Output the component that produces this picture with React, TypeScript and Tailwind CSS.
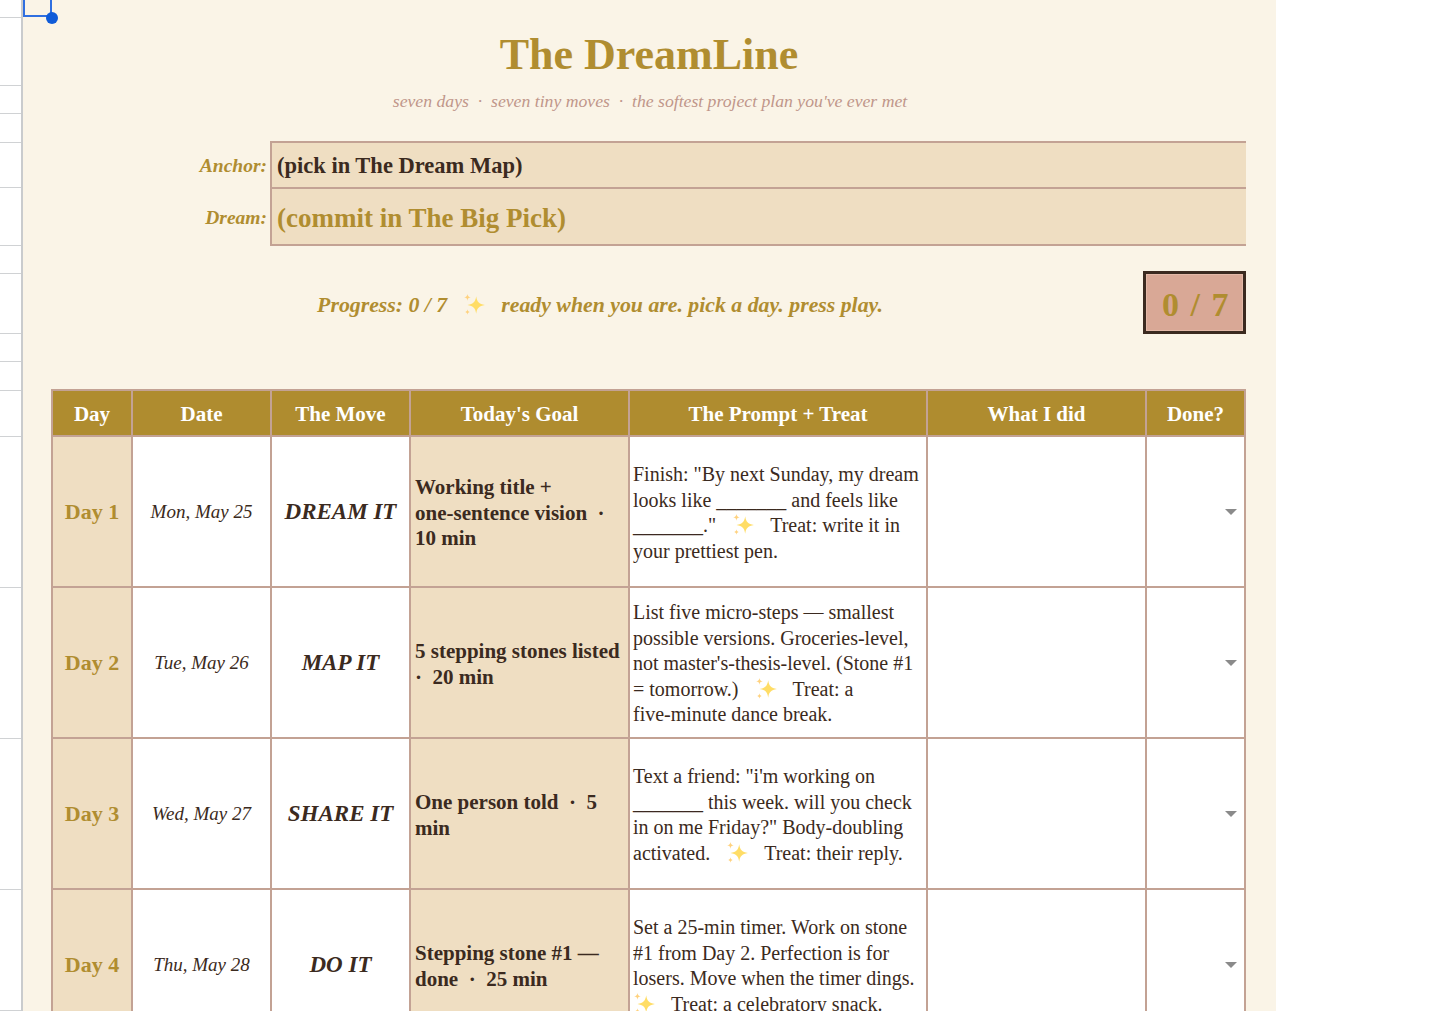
import React from "react";

const Sparkle = () => (
  <svg viewBox="0 0 22 22" className="inline-block w-[24px] h-[24px] align-[-5px] mx-[15px]">
    <path d="M13 3 C13.8 8.2 15.4 10 21 11 C15.4 12 13.8 13.8 13 19 C12.2 13.8 10.6 12 5 11 C10.6 10 12.2 8.2 13 3Z" fill="#FFDD66" />
    <path d="M5 1 C5.3 3 5.9 3.6 8 4 C5.9 4.4 5.3 5 5 7 C4.7 5 4.1 4.4 2 4 C4.1 3.6 4.7 3 5 1Z" fill="#FFD27F" />
    <path d="M5 15 C5.2 16.6 5.7 17 7 17.5 C5.7 18 5.2 18.4 5 20 C4.8 18.4 4.3 18 3 17.5 C4.3 17 4.8 16.6 5 15Z" fill="#FFD27F" />
  </svg>
);

const railRows = [18, 68, 28, 29, 45, 58, 28, 60, 28, 29, 46, 151, 151, 151, 121];

const rows = [
  {
    day: "Day 1",
    date: "Mon, May 25",
    move: "DREAM IT",
    goal: <>Working title +<br />one-sentence vision &nbsp;·&nbsp;<br />10 min</>,
    prompt: <>Finish: "By next Sunday, my dream<br />looks like _______ and feels like<br />_______."<Sparkle />Treat: write it in<br />your prettiest pen.</>,
  },
  {
    day: "Day 2",
    date: "Tue, May 26",
    move: "MAP IT",
    goal: <>5 stepping stones listed<br />·&nbsp; 20 min</>,
    prompt: <>List five micro-steps — smallest<br />possible versions. Groceries-level,<br />not master's-thesis-level. (Stone #1<br />= tomorrow.)<Sparkle />Treat: a<br />five-minute dance break.</>,
  },
  {
    day: "Day 3",
    date: "Wed, May 27",
    move: "SHARE IT",
    goal: <>One person told &nbsp;·&nbsp; 5<br />min</>,
    prompt: <>Text a friend: "i'm working on<br />_______ this week. will you check<br />in on me Friday?" Body-doubling<br />activated.<Sparkle />Treat: their reply.</>,
  },
  {
    day: "Day 4",
    date: "Thu, May 28",
    move: "DO IT",
    goal: <>Stepping stone #1 —<br />done &nbsp;·&nbsp; 25 min</>,
    prompt: <>Set a 25-min timer. Work on stone<br />#1 from Day 2. Perfection is for<br />losers. Move when the timer dings.<br /><span className="-ml-[16px]"><Sparkle /></span>Treat: a celebratory snack.</>,
  },
];

const heads = ["Day", "Date", "The Move", "Today's Goal", "The Prompt + Treat", "What I did", "Done?"];
const widths = ["w-[80px]", "w-[139px]", "w-[139px]", "w-[219px]", "w-[298px]", "w-[219px]", "w-[99px]"];

export default function App() {
  return (
    <div className="relative flex w-[1445px] h-[1011px] overflow-hidden bg-white text-[#3b2a20] font-['Liberation_Serif',serif]">
      <div className="w-[23px] shrink-0 border-r-2 border-[#c9cbcd]">
        {railRows.map((h, i) => (
          <div key={i} style={{ height: h }} className="border-b border-[#d0d2d4]" />
        ))}
      </div>

      <div className="w-[1253px] shrink-0 bg-[#faf4e7] pl-[29px] pr-[30px]">
        <h1 className="h-[84px] pt-[28px] text-center text-[44px] leading-[54px] font-bold text-[#b08d30]">The DreamLine</h1>
        <p className="h-[57px] pt-[2px] pl-[2px] text-center text-[17.7px] leading-[30px] italic text-[#c0968a]">
          seven days &nbsp;·&nbsp; seven tiny moves &nbsp;·&nbsp; the softest project plan you've ever met
        </p>

        <div className="flex items-center h-[48px]">
          <span className="w-[218px] pr-[3px] pt-[2px] text-right text-[19.5px] font-bold italic text-[#b08d30]">Anchor:</span>
          <div className="flex-1 h-full flex items-center pl-[5px] pt-[1px] bg-[#efdec2] border-y-2 border-l-2 border-[#c3a294] text-[22.5px] font-bold">(pick in The Dream Map)</div>
        </div>
        <div className="flex items-center h-[57px]">
          <span className="w-[218px] pr-[3px] text-right text-[19.5px] font-bold italic text-[#b08d30]">Dream:</span>
          <div className="flex-1 h-full flex items-center pl-[5px] pt-[4px] bg-[#efdec2] border-b-2 border-l-2 border-[#c3a294] text-[27px] font-bold text-[#b08d30]">(commit in The Big Pick)</div>
        </div>

        <div className="flex items-center h-[63px] mt-[25px]">
          <p className="flex-1 pt-[5px] pl-[5px] text-center text-[21.8px] font-bold italic text-[#b08d30] whitespace-nowrap">
            Progress: 0 / 7<Sparkle />ready when you are. pick a day. press play.
          </p>
          <div className="w-[103px] h-[63px] flex items-center justify-center pt-[3px] pl-[3px] bg-[#d9a896] border-[3px] border-[#3b2a20] shadow-[inset_0_0_0_1px_#e3b9a8] text-[34px] font-bold text-[#b08d30] tracking-[1.5px] whitespace-pre">0 / 7</div>
        </div>

        <table className="mt-[55px] -ml-[1px] w-[1193px] table-fixed border-collapse">
          <colgroup>
            {widths.map((w, i) => <col key={i} className={w} />)}
          </colgroup>
          <thead>
            <tr className="h-[46px] bg-[#af8c2f]">
              {heads.map((h) => (
                <th key={h} className="border-2 border-[#c3a294] pt-[3px] text-center text-[21px] font-bold text-white">{h}</th>
              ))}
            </tr>
          </thead>
          <tbody>
            {rows.map((r) => (
              <tr key={r.day} className="h-[151px] bg-white">
                <td className="border-2 border-[#c3a294] bg-[#efdec2] text-center text-[22px] font-bold text-[#b08d30]">{r.day}</td>
                <td className="border-2 border-[#c3a294] pt-[2px] text-center text-[19px] italic whitespace-nowrap">{r.date}</td>
                <td className="border-2 border-[#c3a294] pt-[2px] text-center text-[23px] font-bold italic whitespace-nowrap">{r.move}</td>
                <td className="border-2 border-[#c3a294] bg-[#efdec2] pl-[4px] pt-[4px] text-[21px] leading-[25.5px] font-bold whitespace-nowrap">{r.goal}</td>
                <td className="border-2 border-[#c3a294] pl-[3px] pt-[3px] text-[20px] leading-[25.5px] whitespace-nowrap">{r.prompt}</td>
                <td className="border-2 border-[#c3a294]"></td>
                <td className="border-2 border-[#c3a294]">
                  <div className="flex justify-end pr-[7px]">
                    <svg viewBox="0 0 12 6" className="w-[12px] h-[6px]"><path d="M0 0H12L6 6Z" fill="#8a8a8a" /></svg>
                  </div>
                </td>
              </tr>
            ))}
          </tbody>
        </table>
      </div>

      <div className="absolute left-[23px] top-0 w-[29px] h-[17px] border-b-2 border-r-2 border-l-2 border-[#2f6fe0]" />
      <div className="absolute left-[46px] top-[12px] w-[12px] h-[12px] rounded-full bg-[#0f5bd8]" />
    </div>
  );
}
